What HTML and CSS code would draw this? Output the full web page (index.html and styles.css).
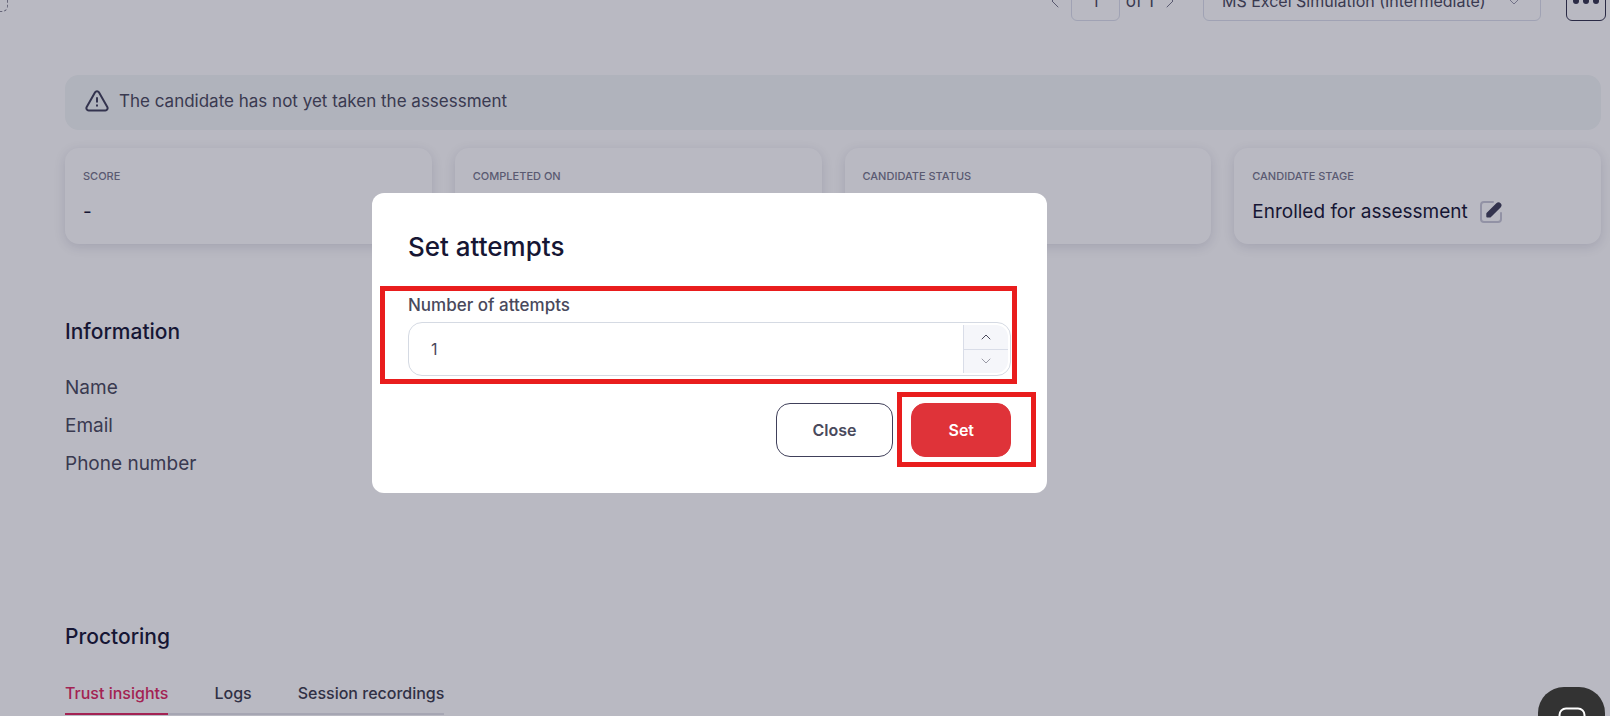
FILE: index.html
```html
<!DOCTYPE html>
<html lang="en">
<head>
<meta charset="utf-8">
<title>Candidate assessment</title>
<link rel="stylesheet" href="styles.css">
</head>
<body>
<div class="page">
  <header class="toolbar">
    <span class="dropzone"></span>
    <div class="pager">
      <button class="pager-step" type="button" aria-label="Previous"><svg width="8" height="14" viewBox="0 0 8 14"><path d="M7 1 1 7l6 6"/></svg></button>
      <input class="pager-input" type="text" value="1" aria-label="Page">
      <span class="pager-total">of 1</span>
      <button class="pager-step" type="button" aria-label="Next"><svg width="8" height="14" viewBox="0 0 8 14"><path d="m1 1 6 6-6 6"/></svg></button>
    </div>
    <div class="select-wrap">
      <select class="select" aria-label="Assessment"><option>MS Excel Simulation (Intermediate)</option></select>
      <svg class="select-arrow" width="10" height="6" viewBox="0 0 10 6"><path d="m1 1 4 4 4-4"/></svg>
    </div>
    <button class="more" type="button" aria-label="More"><svg width="26" height="6" viewBox="0 0 26 6"><circle cx="3" cy="3" r="3"/><circle cx="13" cy="3" r="3"/><circle cx="23" cy="3" r="3"/></svg></button>
  </header>

  <main class="content">
    <div class="banner">
      <svg class="warn" width="24" height="24" viewBox="0 0 24 24"><path d="M10.100 3.300 1.700 18.100A2.200 2.200 0 0 0 3.600 21.400h16.800a2.200 2.200 0 0 0 1.900-3.300L13.900 3.300a2.200 2.200 0 0 0-3.800 0zM12 9v3.800M12 16.300v.4"/></svg>
      <span>The candidate has not yet taken the assessment</span>
    </div>

    <section class="cards">
      <article class="card"><h3 class="card-label">SCORE</h3><p class="card-value">-</p></article>
      <article class="card"><h3 class="card-label">COMPLETED ON</h3></article>
      <article class="card"><h3 class="card-label">CANDIDATE STATUS</h3></article>
      <article class="card"><h3 class="card-label">CANDIDATE STAGE</h3>
        <p class="card-value">Enrolled for assessment
          <button class="edit" type="button" aria-label="Edit stage"><svg width="22" height="22" viewBox="0 0 22 22"><path class="edit-frame" d="M13 1H4a3 3 0 0 0-3 3v14a3 3 0 0 0 3 3h14a3 3 0 0 0 3-3v-6"/><path class="edit-pen" d="M6.500 12 16.300 2.200q2.300-2 4.300 0t0 4.200L11 16q-.5.500-1.200.5H7.200q-.9 0-.9-.9v-2.600q0-.6.200-1z"/></svg></button>
        </p>
      </article>
    </section>

    <section class="info">
      <h2 class="heading">Information</h2>
      <ul class="fields"><li>Name</li><li>Email</li><li>Phone number</li></ul>
    </section>

    <section class="proctoring">
      <h2 class="heading">Proctoring</h2>
      <nav class="tabs">
        <a class="tab tab-active" href="#trust">Trust insights</a>
        <a class="tab" href="#logs">Logs</a>
        <a class="tab" href="#sessions">Session recordings</a>
      </nav>
    </section>
  </main>
</div>

<div class="overlay">
  <form class="modal" role="dialog" aria-labelledby="modal-title">
    <h1 class="modal-title" id="modal-title">Set attempts</h1>
    <label class="modal-label" for="attempts">Number of attempts</label>
    <div class="number">
      <input class="number-input" id="attempts" type="text" inputmode="numeric" value="1">
      <div class="spinner">
        <button class="spin spin-up" type="button" aria-label="Increase"><svg width="10" height="6" viewBox="0 0 10 6"><path d="m1 5 4-4 4 4"/></svg></button>
        <button class="spin spin-down" type="button" aria-label="Decrease"><svg width="10" height="6" viewBox="0 0 10 6"><path d="m1 1 4 4 4-4"/></svg></button>
      </div>
    </div>
    <div class="actions">
      <button class="btn btn-close" type="button">Close</button>
      <button class="btn btn-set" type="submit">Set</button>
    </div>
    <span class="mark mark-field"></span>
    <span class="mark mark-set"></span>
  </form>
</div>

<button class="chat" type="button" aria-label="Open chat"><svg width="28" height="32" viewBox="0 0 28 32"><path d="M8 1.500h12a6.500 6.500 0 0 1 6.500 6.500v22l-5-3.500H8A6.500 6.500 0 0 1 1.500 20V8A6.500 6.500 0 0 1 8 1.500zM8 19q6 4 12 0"/></svg></button>
</body>
</html>
```
FILE: styles.css
```css
* { box-sizing: border-box; }

body {
  margin: 0;
  height: 100vh;
  overflow: hidden;
  background: #fff;
  color: #49495c;
  font-family: Inter, "Open Sans", sans-serif;
  font-size: 16px;
  line-height: 24px;
}

h1, h2, h3, p, ul { margin: 0; padding: 0; font-weight: 500; }
button, input, select { font: inherit; color: inherit; margin: 0; padding: 0; }
button { border: 0; background: none; }
svg { display: block; fill: none; stroke: currentColor; stroke-linecap: round; stroke-linejoin: round; }

.toolbar {
  position: relative;
  display: flex;
  align-items: center;
  justify-content: flex-end;
  height: 40px;
  margin-top: -19px;
  padding-right: 4px;
}

.dropzone {
  position: absolute;
  left: -32px;
  top: 0;
  width: 40px;
  height: 31px;
  border: 1px dashed #8a8a98;
  border-radius: 6px;
}

.pager { display: flex; align-items: center; margin-right: 29px; }
.pager-step { color: #77778a; }
.pager-input {
  width: 49px;
  height: 40px;
  margin: 0 6px 0 12px;
  border: 1px solid #dbdfeb;
  border-radius: 6px;
  background: none;
  text-align: center;
}
.pager-total { margin-right: 12px; font-size: 17px; }

.select-wrap { position: relative; width: 338px; margin-right: 25px; }
.select {
  appearance: none;
  width: 100%;
  height: 40px;
  padding-left: 18px;
  border: 1px solid #dbdfeb;
  border-radius: 6px;
  background: none;
}
.select-arrow { position: absolute; right: 22px; top: 18px; color: #9a9aac; }

.more {
  display: grid;
  place-items: center;
  width: 40px;
  height: 40px;
  border: 1px solid #33334d;
  border-radius: 6px;
  color: #33334d;
}
.more svg { fill: currentColor; stroke: none; }

.content { padding: 54px 9px 0 65px; }

.banner {
  display: flex;
  align-items: center;
  gap: 10px;
  height: 55px;
  padding: 0 20px 3px;
  border-radius: 14px;
  background: #f2f6f6;
  font-size: 17px;
}
.warn { stroke-width: 2; color: #40405a; }

.cards {
  display: grid;
  grid-template-columns: repeat(4, 1fr);
  gap: 23px;
  margin-top: 18px;
}
.card {
  height: 96px;
  padding: 16px 18px;
  border-radius: 14px;
  background: #fff;
  box-shadow: 0 3px 12px rgba(30, 30, 70, .14);
}
.card-label { color: #77778c; font-size: 11px; }
.card-value {
  display: flex;
  align-items: center;
  gap: 12px;
  margin-top: 12px;
  color: #161634;
  font-size: 19px;
  font-weight: 400;
}
.edit-frame { stroke: #c8c8d6; stroke-width: 2; }
.edit-pen { fill: #40405a; stroke: none; }

.info { margin-top: 72px; }
.heading { color: #161634; font-size: 21px; line-height: 32px; }
.fields {
  margin-top: 21px;
  list-style: none;
  font-size: 19px;
  line-height: 38px;
}
.fields li { font-weight: 400; }

.proctoring { margin-top: 138px; }
.tabs {
  display: inline-flex;
  gap: 46px;
  margin-top: 28px;
  border-bottom: 2px solid #e4e4ea;
}
.tab {
  margin-bottom: -2px;
  padding-bottom: 8px;
  border-bottom: 2px solid transparent;
  color: #3c3c4c;
  font-weight: 500;
  text-decoration: none;
}
.tab-active { border-color: #e02860; color: #e02860; }

.overlay {
  position: fixed;
  inset: 0;
  display: flex;
  align-items: center;
  justify-content: center;
  padding: 0 191px 30px 0;
  background: rgba(22, 22, 52, .3);
}
.modal {
  position: relative;
  width: 675px;
  padding: 36px;
  border-radius: 12px;
  background: #fff;
}
.modal-title { color: #161634; font-size: 26px; line-height: 36px; }
.modal-label { display: block; margin-top: 28px; padding-bottom: 5px; font-size: 17px; font-weight: 500; }

.number {
  display: flex;
  height: 54px;
  padding: 2px;
  border: 1px solid #d5dae3;
  border-radius: 14px;
}
.number-input { flex: 1; min-width: 0; padding-left: 20px; border: 0; outline: 0; background: none; }
.spinner {
  display: flex;
  flex-direction: column;
  width: 45px;
  border-left: 1px solid #d9dde8;
  border-radius: 0 12px 12px 0;
  background: #f5f6fa;
}
.spin { flex: 1; display: grid; place-items: center; }
.spin-down { border-top: 1px solid #d9dde8; color: #9a9aa6; }

.actions { display: flex; justify-content: flex-end; gap: 18px; margin-top: 27px; }
.btn {
  height: 54px;
  padding: 0 36px;
  border: 1px solid #40405a;
  border-radius: 14px;
  font-weight: 600;
}
.btn-set { border-color: #df3339; background: #df3339; color: #fff; }

.mark { position: absolute; border: 5px solid #e91d1d; pointer-events: none; }
.mark-field { left: 8px; right: 30px; top: 93px; height: 98px; }
.mark-set { right: 11px; bottom: 26px; width: 139px; height: 75px; }

.chat {
  position: fixed;
  right: 5px;
  bottom: -38px;
  display: flex;
  justify-content: center;
  width: 67px;
  height: 67px;
  padding-top: 20px;
  border-radius: 26px;
  background: #333;
  color: #fff;
}
.chat svg { stroke-width: 2; }
```
